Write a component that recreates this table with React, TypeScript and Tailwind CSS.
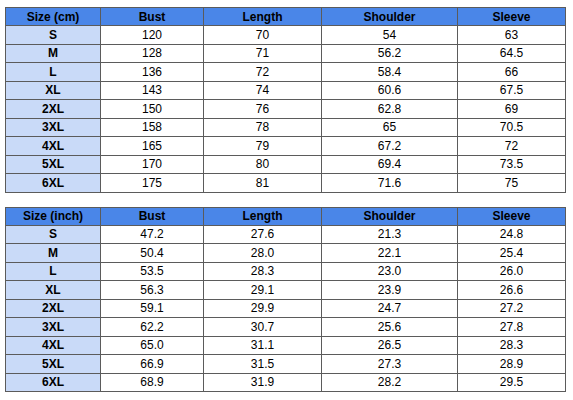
const cols = ['Bust', 'Length', 'Shoulder', 'Sleeve'];
const sizes = ['S', 'M', 'L', 'XL', '2XL', '3XL', '4XL', '5XL', '6XL'];

const cm = [
  ['120', '70', '54', '63'],
  ['128', '71', '56.2', '64.5'],
  ['136', '72', '58.4', '66'],
  ['143', '74', '60.6', '67.5'],
  ['150', '76', '62.8', '69'],
  ['158', '78', '65', '70.5'],
  ['165', '79', '67.2', '72'],
  ['170', '80', '69.4', '73.5'],
  ['175', '81', '71.6', '75'],
];

const inch = [
  ['47.2', '27.6', '21.3', '24.8'],
  ['50.4', '28.0', '22.1', '25.4'],
  ['53.5', '28.3', '23.0', '26.0'],
  ['56.3', '29.1', '23.9', '26.6'],
  ['59.1', '29.9', '24.7', '27.2'],
  ['62.2', '30.7', '25.6', '27.8'],
  ['65.0', '31.1', '26.5', '28.3'],
  ['66.9', '31.5', '27.3', '28.9'],
  ['68.9', '31.9', '28.2', '29.5'],
];

function SizeTable({ unit, rows }: { unit: string; rows: string[][] }) {
  return (
    <table className="w-[560px] table-fixed border-collapse text-[12px] leading-none text-black">
      <colgroup>
        <col className="w-[95px]" />
        <col className="w-[103px]" />
        <col className="w-[118px]" />
        <col className="w-[136px]" />
        <col className="w-[108px]" />
      </colgroup>
      <thead>
        <tr className="h-[18px] bg-[#4a86e8]">
          <th className="border border-[#5b5b5b] font-bold">Size ({unit})</th>
          {cols.map((c) => (
            <th key={c} className="border border-[#5b5b5b] font-bold">
              {c}
            </th>
          ))}
        </tr>
      </thead>
      <tbody>
        {rows.map((r, i) => (
          <tr key={sizes[i]} className="h-[18.5px]">
            <td className="border border-[#5b5b5b] bg-[#c9daf8] text-center font-bold">{sizes[i]}</td>
            {r.map((v, j) => (
              <td key={j} className="border border-[#5b5b5b] bg-white text-center">
                {v}
              </td>
            ))}
          </tr>
        ))}
      </tbody>
    </table>
  );
}

export default function App() {
  return (
    <div className="flex h-[400px] w-[573px] flex-col gap-[14px] bg-white pl-[5px] pt-[7px] font-['Liberation_Sans',Arial,sans-serif]">
      <SizeTable unit="cm" rows={cm} />
      <SizeTable unit="inch" rows={inch} />
    </div>
  );
}
